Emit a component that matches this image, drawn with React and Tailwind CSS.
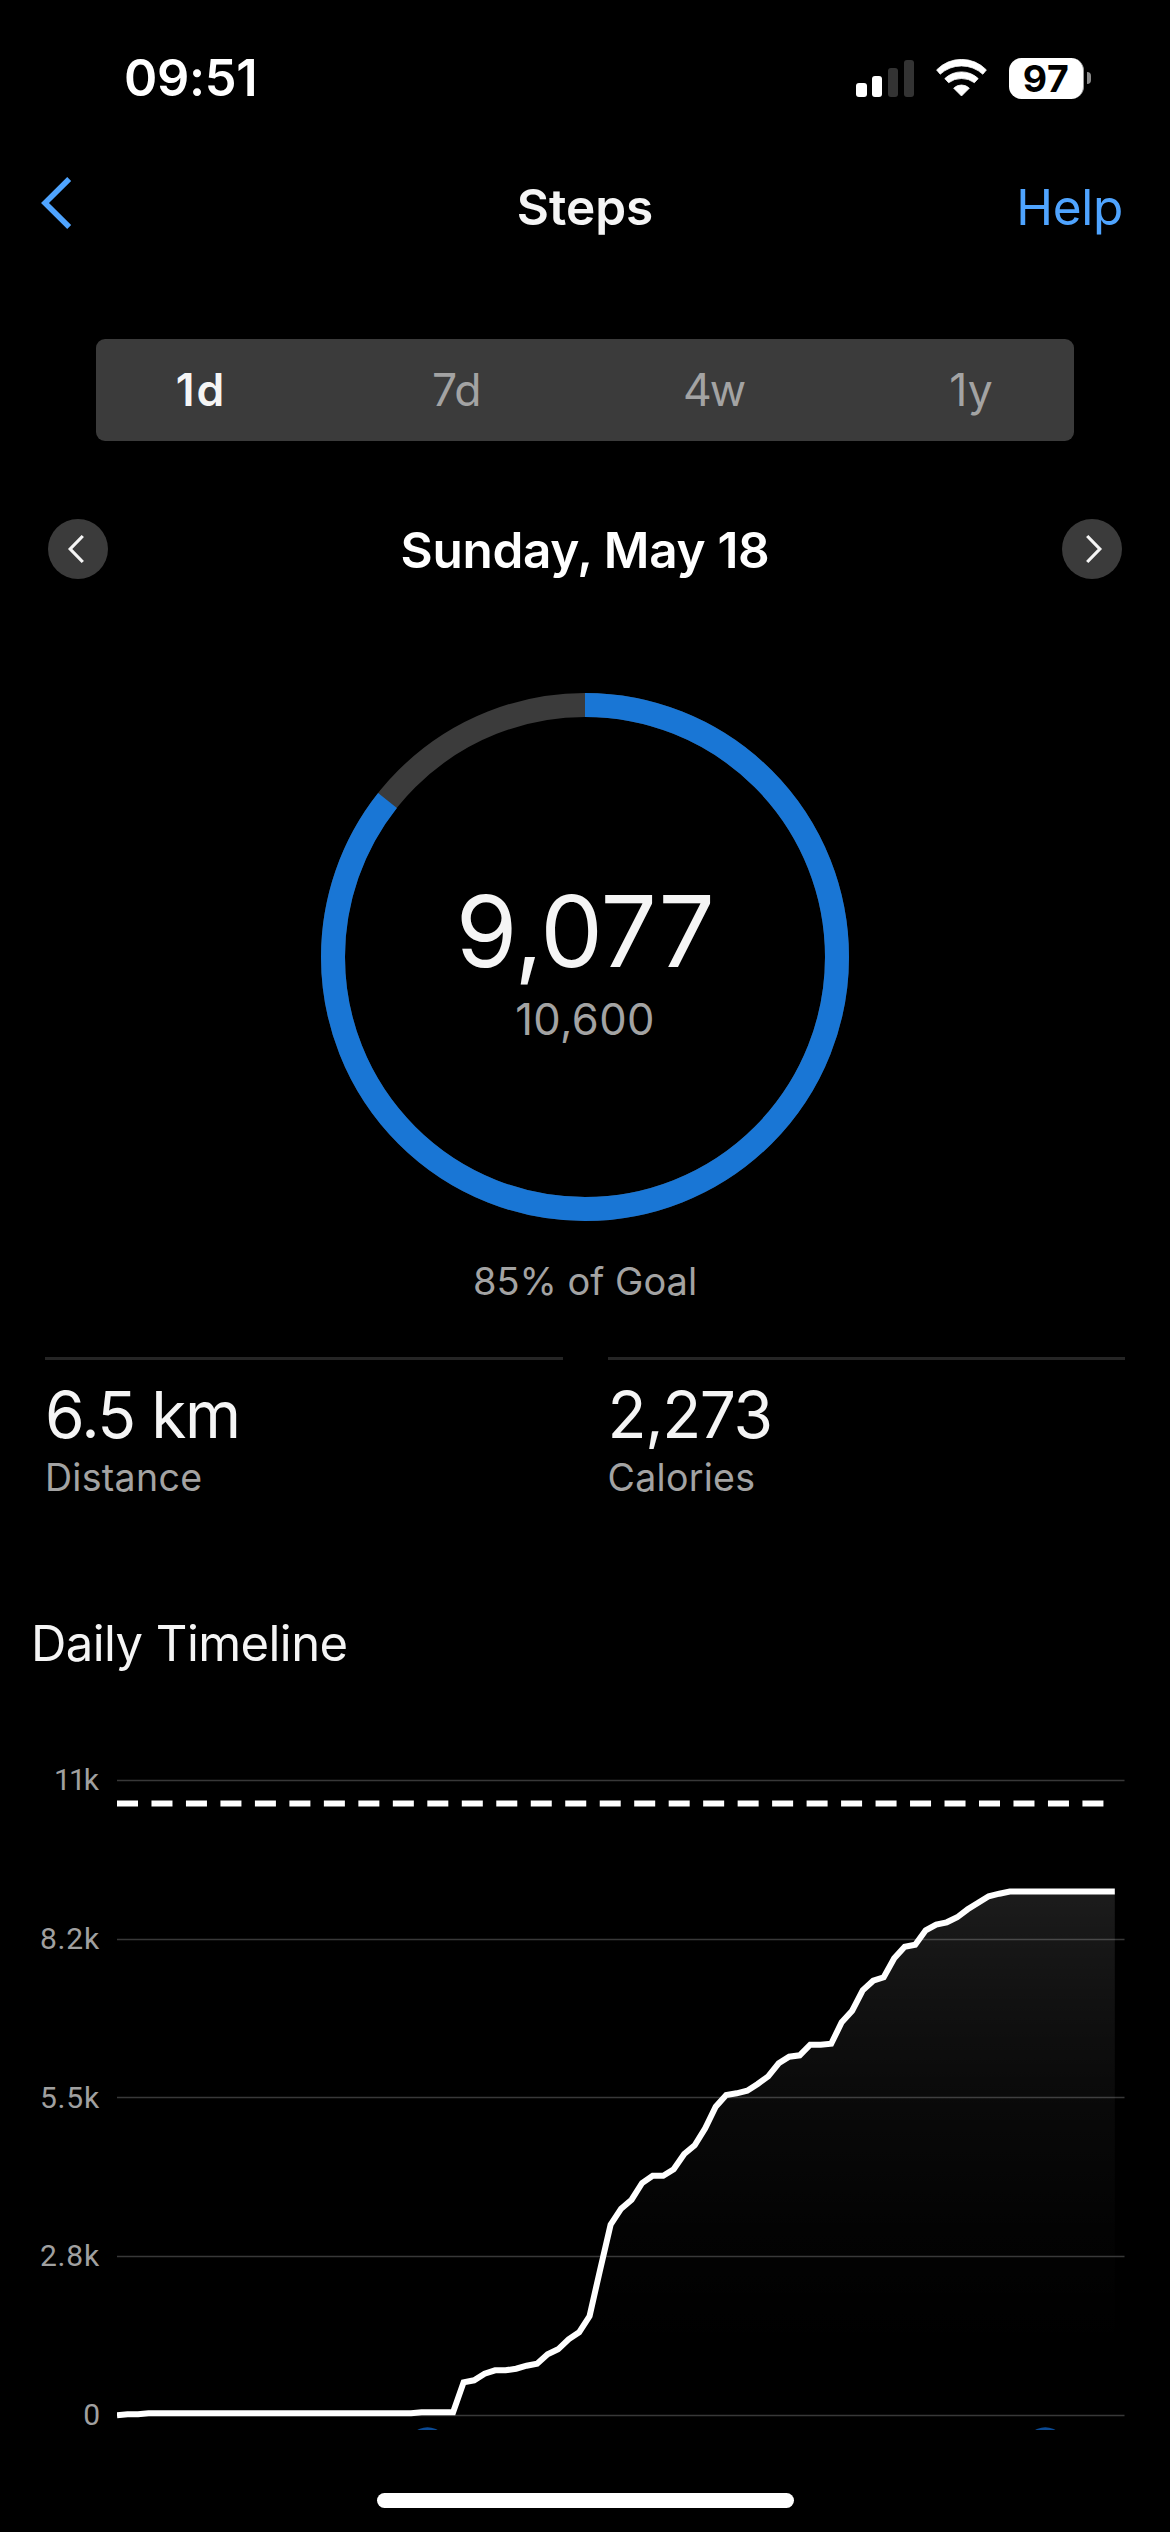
import React from "react";

const STEP = 10.503;
const LEFT = 117;

// Y coordinate of the cumulative step line, one value per 15 minutes.
const LINE = [
  2415.3, 2414.3, 2414.3,
  ...Array(26).fill(2413.3),
  2412.3, 2412.3, 2412.3, 2412.3,
  2382.3, 2380.3, 2373.7, 2370.3, 2370.3, 2368.7, 2365.7, 2363.7, 2354.3,
  2349.3, 2339.3, 2332.3, 2316, 2269.8, 2224.7, 2208.7, 2199.7, 2183, 2175.7,
  2175.7, 2169.3, 2154, 2145.3, 2128.3, 2106.7, 2095, 2093.3, 2090.7, 2084,
  2076.3, 2063.3, 2056.7, 2055.3, 2044.7, 2044.7, 2043.7, 2022.3, 2010.7,
  1990.3, 1980.7, 1977.3, 1958.3, 1946.7, 1944.7, 1930.3, 1924.7, 1922.3,
  1917.3, 1909.3, 1902.7, 1896.3, 1893.7,
  ...Array(11).fill(1891.5),
];

const linePath = LINE.map((y, i) => `${i ? "L" : "M"}${(LEFT + i * STEP).toFixed(1)} ${y}`).join("");
const areaPath = `${linePath}V2415.5H${LEFT}Z`;
const GRID = [1780.5, 1939.5, 2097.5, 2256.5, 2415.5];

function StatusBar() {
  return (
    <header className="flex h-[156px] items-center justify-between pr-[79px] pl-[124px]">
      <span className="text-[50.5px] leading-[60px] font-semibold tracking-[-0.32px] text-white">09:51</span>
      <div className="flex items-center gap-[22px]">
        <div className="flex h-[37px] items-end gap-[5.4px]">
          <span className="h-[14px] w-[10.4px] rounded-[3px] bg-white" />
          <span className="h-[21px] w-[10.4px] rounded-[3px] bg-white" />
          <span className="h-[29px] w-[10.4px] rounded-[3px] bg-[#333333]" />
          <span className="h-[37px] w-[10.4px] rounded-[3px] bg-[#333333]" />
        </div>
        <svg className="h-[38px] w-[51px]" viewBox="936.2 59 51 38" fill="white" stroke="white" strokeWidth="0.8" strokeLinejoin="round">
          <path d="M936.8 69.9A34.7 34.7 0 0 1 986.6 69.9L983 74.2A31.5 31.5 0 0 0 940.4 74.2Z" />
          <path d="M945 78.6A24.1 24.1 0 0 1 978.4 78.6L974.6 82.7A21.8 21.8 0 0 0 948.8 82.7Z" />
          <path d="M953.9 88.2A11 11 0 0 1 969.5 88.2L961.7 96Z" />
        </svg>
        <div className="flex items-center gap-[3px]">
          <div className="flex h-[41px] w-[75px] items-center justify-center rounded-[12.5px] border-r border-[#9a9a9a] bg-white text-[37.5px] leading-[41px] font-bold tracking-[0.6px] text-black">
            97
          </div>
          <span className="h-[12.5px] w-[4px] rounded-r-full bg-[#8c8c8c]" />
        </div>
      </div>
    </header>
  );
}

function NavBar() {
  return (
    <nav className="grid h-[102px] grid-cols-3 items-center px-[47px]">
      <svg className="mb-2 -ml-[6px] h-[52px] w-[31px]" viewBox="41 177 31 52" fill="none" stroke="#4fa4ff" strokeWidth="5.6">
        <path d="M69.2 179L45 203L69.2 227" />
      </svg>
      <h1 className="text-center text-[49.5px] leading-[60px] font-semibold text-[#f5f5f5]">Steps</h1>
      <span className="text-right text-[49.5px] leading-[60px] tracking-[-0.31px] text-[#4fa4ff]">Help</span>
    </nav>
  );
}

function RangeTabs() {
  return (
    <div className="mx-24 mt-[81px] h-[102px] rounded-[9px] bg-[#3b3b3b]">
      <div className="-mx-[25px] grid h-full grid-cols-4 items-center text-center text-[44.5px] leading-[60px] text-[#a3a3a3]">
        <span className="pl-[3px] font-semibold tracking-[2px] text-[#f5f5f5]">1d</span>
        <span className="tracking-[-0.5px]">7d</span>
        <span className="tracking-[-2px]">4w</span>
        <span className="pl-px">1y</span>
      </div>
    </div>
  );
}

function RoundArrow({ d }) {
  return (
    <span className="flex size-[60px] items-center justify-center rounded-full bg-[#3b3b3b]">
      <svg className="size-[60px]" viewBox="0 0 60 60" fill="none" stroke="#f5f5f5" strokeWidth="3.2">
        <path d={d} />
      </svg>
    </span>
  );
}

function DatePicker() {
  return (
    <div className="mt-[78px] flex h-[60px] items-center justify-between px-12">
      <RoundArrow d="M34.8 17L22.2 30L34.8 43" />
      <h2 className="pt-0.5 text-[49.5px] leading-[60px] font-semibold tracking-[-0.3px] text-white">Sunday, May 18</h2>
      <RoundArrow d="M25.2 17L37.8 30L25.2 43" />
    </div>
  );
}

function GoalRing() {
  const circumference = 2 * Math.PI * 252;
  return (
    <section className="mt-[114px] flex flex-col items-center">
      <div className="relative flex size-[528px] flex-col items-center pt-[188px]">
        <svg className="absolute inset-0 size-full" viewBox="0 0 528 528" fill="none" strokeWidth="24">
          <circle cx="264" cy="264" r="252" stroke="#3b3b3b" />
          <circle
            cx="264"
            cy="264"
            r="252"
            stroke="#1976d5"
            transform="rotate(-90 264 264)"
            strokeDasharray={`${(circumference * 9077) / 10600} ${circumference}`}
          />
        </svg>
        <div className="relative text-[99.5px] leading-[100px] tracking-[-0.42px] text-[#f5f5f5]">9,077</div>
        <div className="relative mt-[13px] text-[43.5px] leading-[50px] tracking-[0.4px] text-[#a3a3a3]">10,600</div>
      </div>
      <p className="mt-[30px] text-[38px] leading-[60px] text-[#a3a3a3]">85% of Goal</p>
    </section>
  );
}

function Stat({ value, label }) {
  return (
    <div className="border-t-[3px] border-[#252525] pt-[25px]">
      <div className="text-[64px] leading-[60px] tracking-[-1.4px] text-[#f5f5f5]">{value}</div>
      <div className="mt-[13px] text-[37.5px] leading-[40px] tracking-[0.3px] text-[#a3a3a3]">{label}</div>
    </div>
  );
}

function Timeline() {
  return (
    <section className="mt-[116px]">
      <h3 className="pl-[31px] text-[49px] leading-[60px] tracking-[-0.56px] text-[#f5f5f5]">Daily Timeline</h3>
      <div className="mt-[86px] flex h-[670px]">
        <div className="flex w-[117px] flex-col gap-[118.8px] pr-[17px] text-right [font-family:Roboto,sans-serif] text-[30px] leading-[40px] text-[#a0a0a0]">
          <span className="pr-[3px] tracking-[-2px]">11k</span>
          <span className="tracking-[0.8px]">8.2k</span>
          <span className="tracking-[0.8px]">5.5k</span>
          <span className="tracking-[0.8px]">2.8k</span>
          <span>0</span>
        </div>
        <svg className="h-[670px] w-[1053px]" viewBox="117 1760 1053 670" fill="none">
          <defs>
            <linearGradient id="area" gradientUnits="userSpaceOnUse" x1="0" x2="0" y1="1891" y2="2415">
              <stop offset="0" stopColor="white" stopOpacity="0.11" />
              <stop offset="0.22" stopColor="white" stopOpacity="0.066" />
              <stop offset="0.42" stopColor="white" stopOpacity="0.035" />
              <stop offset="0.65" stopColor="white" stopOpacity="0.012" />
              <stop offset="0.88" stopColor="white" stopOpacity="0" />
            </linearGradient>
          </defs>
          <path d={areaPath} fill="url(#area)" />
          {GRID.map((y) => (
            <path key={y} d={`M117 ${y}H1124.5`} stroke="white" strokeOpacity="0.22" strokeWidth="1.5" />
          ))}
          <path d="M117 1803.5H1104" stroke="white" strokeWidth="6" strokeDasharray="21 13.48" />
          <path d={linePath} stroke="white" strokeWidth="6" />
          <circle cx="427.5" cy="2447" r="19.8" fill="#0b4a94" />
          <circle cx="1045.3" cy="2447" r="19.8" fill="#0b4a94" />
        </svg>
      </div>
    </section>
  );
}

export default function App() {
  return (
    <main className="h-[2532px] w-[1170px] overflow-hidden bg-black [font-family:Inter,sans-serif]">
      <StatusBar />
      <NavBar />
      <RangeTabs />
      <DatePicker />
      <GoalRing />
      <div className="mt-[46px] grid grid-cols-2 gap-[45px] px-[45px]">
        <Stat value="6.5 km" label="Distance" />
        <Stat value="2,273" label="Calories" />
      </div>
      <Timeline />
      <div className="mx-auto mt-[63px] h-[15px] w-[417px] rounded-full bg-white" />
    </main>
  );
}
